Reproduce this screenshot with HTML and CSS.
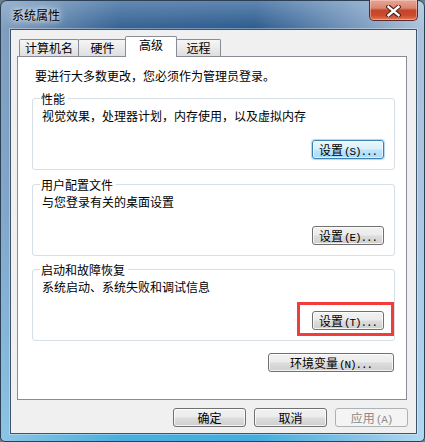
FILE: index.html
```html
<!DOCTYPE html>
<html lang="zh-CN">
<head>
<meta charset="utf-8">
<title>系统属性</title>
<link rel="stylesheet" href="styles.css">
</head>
<body>
<div class="window">
  <div class="titlebar">
    <span class="title">系统属性</span>
    <span class="close" aria-label="关闭">
      <svg width="15" height="12" viewBox="0 0 15 12">
        <path d="M2.5 1.8 L12.5 10.2 M12.5 1.8 L2.5 10.2" stroke="#4b1d14" stroke-width="4.4" stroke-linecap="square" fill="none"/>
        <path d="M2.5 1.8 L12.5 10.2 M12.5 1.8 L2.5 10.2" stroke="#ffffff" stroke-width="2.4" stroke-linecap="square" fill="none"/>
      </svg>
    </span>
  </div>
  <div class="client">
    <div class="tabs">
      <div class="tab t1">计算机名</div>
      <div class="tab t2">硬件</div>
      <div class="tab active">高级</div>
      <div class="tab t4">远程</div>
    </div>
    <div class="panel">
      <p class="intro">要进行大多数更改，您必须作为管理员登录。</p>
      <fieldset class="group g1">
        <legend>性能</legend>
        <p class="desc">视觉效果，处理器计划，内存使用，以及虚拟内存</p>
        <div class="actions"><button class="btn small focus">设置<span class="mn">(S)...</span></button></div>
      </fieldset>
      <fieldset class="group g2">
        <legend>用户配置文件</legend>
        <p class="desc">与您登录有关的桌面设置</p>
        <div class="actions"><button class="btn small">设置<span class="mn">(E)...</span></button></div>
      </fieldset>
      <fieldset class="group g3">
        <legend>启动和故障恢复</legend>
        <p class="desc">系统启动、系统失败和调试信息</p>
        <div class="actions"><span class="marked"><button class="btn small">设置<span class="mn">(T)...</span></button></span></div>
      </fieldset>
      <div class="env-row"><button class="btn wide">环境变量<span class="mn">(N)...</span></button></div>
    </div>
    <div class="footer">
      <button class="btn">确定</button>
      <button class="btn">取消</button>
      <button class="btn disabled" disabled>应用<span class="mn">(A)</span></button>
    </div>
  </div>
</div>
</body>
</html>
```

FILE: styles.css
```css
html, body {
  margin: 0;
  padding: 0;
}
body {
  width: 425px;
  height: 442px;
  overflow: hidden;
  background: #6a7c8c;
  font-family: "Noto Sans CJK SC", "Noto Sans", sans-serif;
  font-size: 12px;
  color: #000;
}
.window {
  box-sizing: border-box;
  width: 425px;
  height: 442px;
  border: 1px solid #2c4156;
  border-radius: 7px 7px 5px 5px;
  padding: 0 7px 7px 9px;
  display: flex;
  flex-direction: column;
  background:
    linear-gradient(90deg, rgba(200,216,232,0.55) 0, rgba(200,216,232,0.05) 28%, rgba(0,0,0,0) 60%, rgba(205,222,240,0.55) 88%, rgba(215,230,245,0.75) 100%),
    linear-gradient(180deg, #5f86b0 0, #2d5b8e 28px, #2f6ca6 45%, #3a93cc 80%, #44aee0 100%);
}
.titlebar {
  height: 28px;
  flex: none;
  display: flex;
  justify-content: space-between;
  align-items: flex-start;
}
.title {
  margin-left: 2px;
  line-height: 28px;
  font-size: 12px;
  color: #000;
  text-shadow: 0 0 4px rgba(255,255,255,0.9), 0 0 8px rgba(255,255,255,0.7), 0 0 12px rgba(255,255,255,0.5);
}
.close {
  box-sizing: border-box;
  width: 49px;
  height: 21px;
  margin-top: -1px;
  margin-right: -1px;
  border: 1px solid #5b2a22;
  border-top: none;
  border-radius: 0 0 5px 5px;
  background: linear-gradient(180deg, #e7a797 0, #d98673 40%, #c2452c 52%, #cf4a2c 78%, #e27a5b 100%);
  box-shadow: inset 0 0 0 1px rgba(255,220,210,0.45);
  display: flex;
  align-items: center;
  justify-content: center;
}
.close svg {
  display: block;
  margin-top: 1px;
}
.client {
  flex: 1;
  box-sizing: border-box;
  border: 1px solid #3f546b;
  box-shadow: 0 0 0 1px rgba(255,255,255,0.35);
  background: #f0f0f0;
  padding: 6px 9px 6px 6px;
  display: flex;
  flex-direction: column;
}
.tabs {
  display: flex;
  align-items: flex-end;
  padding-left: 2px;
  height: 20px;
  flex: none;
}
.tab {
  box-sizing: border-box;
  height: 17px;
  line-height: 16px;
  text-align: center;
  border: 1px solid #898c95;
  border-bottom: none;
  border-radius: 2px 2px 0 0;
  margin-right: -1px;
  background: linear-gradient(180deg, #f6f6f6 0, #eaeaea 50%, #dedede 100%);
  white-space: nowrap;
}
.t1 { width: 60px; }
.t2 { width: 49px; }
.t4 { width: 45px; }
.tab.active {
  width: 52px;
  height: 21px;
  margin-left: -1px;
  margin-bottom: -1px;
  padding-bottom: 4px;
  background: #ffffff;
  z-index: 2;
}
.panel {
  flex: 1;
  box-sizing: border-box;
  border: 1px solid #898c95;
  background: #ffffff;
  padding-top: 11px;
}
.intro {
  margin: 0;
  padding-left: 17px;
  line-height: 16px;
}
.group {
  margin: 7px 11px 0 14px;
  padding: 0 10px 10px 9px;
  border: 1px solid #d5dfe5;
  border-radius: 3px;
  min-inline-size: 0;
}
.group.g3 {
  margin-top: 6px;
}
.group legend {
  margin-left: -2px;
  padding: 0 3px 0 1px;
  line-height: 15px;
  height: 15px;
}
.desc {
  margin: 2px 0 0 0;
  line-height: 16px;
}
.actions {
  margin-top: 16px;
  display: flex;
  justify-content: flex-end;
}
.env-row {
  margin-top: 12px;
  padding-right: 12px;
  display: flex;
  justify-content: flex-end;
}
.btn {
  box-sizing: border-box;
  width: 73px;
  height: 19px;
  padding: 0;
  margin: 0;
  font-family: "Noto Sans CJK SC", "Noto Sans", sans-serif;
  font-size: 12px;
  line-height: 17px;
  color: #000;
  border: 1px solid #707070;
  border-radius: 3px;
  background: linear-gradient(180deg, #f2f2f2 0, #ebebeb 48%, #dddddd 52%, #cfcfcf 100%);
  box-shadow: inset 0 0 0 1px rgba(255,255,255,0.75);
  text-align: center;
  white-space: nowrap;
}
.btn.small {
  width: 72px;
}
.btn.wide {
  width: 126px;
}
.btn.focus {
  border-color: #3c7fb1;
  background: linear-gradient(180deg, #eaf6fd 0, #d9f0fc 48%, #bee6fd 52%, #a7d9f5 100%);
  box-shadow: inset 0 0 0 1px rgba(255,255,255,0.6), 0 0 1px 1px rgba(120,190,235,0.6);
}
.btn.disabled {
  border-color: #adb2b5;
  background: #f4f4f4;
  box-shadow: none;
  color: #8a8a8a;
}
.mn {
  font-family: "Liberation Mono", monospace;
  font-size: 11px;
  letter-spacing: -1.1px;
  margin-left: 1px;
}
.marked {
  position: relative;
  display: inline-block;
  line-height: 0;
}
.marked::after {
  content: "";
  position: absolute;
  left: -15px;
  right: -10px;
  top: -9px;
  bottom: -6px;
  border: 3px solid #f03c3c;
  pointer-events: none;
}
.footer {
  flex: none;
  margin-top: 8px;
  margin-right: -1px;
  display: flex;
  justify-content: flex-end;
  gap: 8px;
}
```
